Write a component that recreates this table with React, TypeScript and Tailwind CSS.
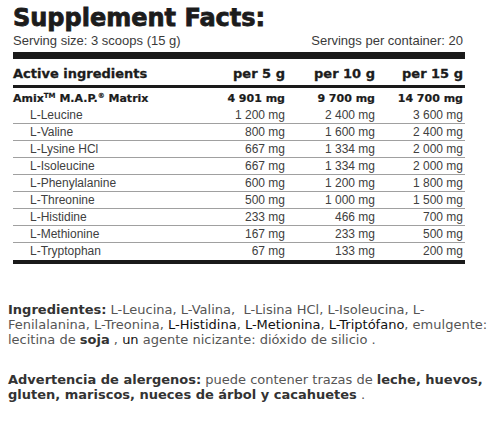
const rows = [
  ['L-Leucine', '1 200 mg', '2 400 mg', '3 600 mg'],
  ['L-Valine', '800 mg', '1 600 mg', '2 400 mg'],
  ['L-Lysine HCl', '667 mg', '1 334 mg', '2 000 mg'],
  ['L-Isoleucine', '667 mg', '1 334 mg', '2 000 mg'],
  ['L-Phenylalanine', '600 mg', '1 200 mg', '1 800 mg'],
  ['L-Threonine', '500 mg', '1 000 mg', '1 500 mg'],
  ['L-Histidine', '233 mg', '466 mg', '700 mg'],
  ['L-Methionine', '167 mg', '233 mg', '500 mg'],
  ['L-Tryptophan', '67 mg', '133 mg', '200 mg'],
]

const grid = 'grid grid-cols-[182px_90px_90px_88px] pr-[2px]'
const bold = "font-['DejaVu_Sans',sans-serif] font-bold"

export default function App() {
  return (
    <div className="w-[501px] h-[422px] bg-white overflow-hidden">
      {/* label */}
      <div className="ml-[13px] w-[452px] text-[#2e2e2e] font-['Liberation_Sans',Arial,sans-serif]">
        <div
          className={`${bold} mt-[6px] text-[24px] leading-[24px] text-[#1c1c1c] whitespace-nowrap [-webkit-text-stroke:0.8px_#1c1c1c]`}
        >
          Supplement Facts:
        </div>
        <div className="mt-[4px] flex justify-between pr-[2px] text-[13px] leading-[13px] text-[#3a3a3a]">
          <span>Serving size: 3 scoops (15 g)</span>
          <span>Servings per container: 20</span>
        </div>
        <div className="mt-[5px] h-[7px] bg-[#1a1a1a]" />
        <div
          className={`${grid} ${bold} h-[26px] items-center text-[13px] leading-[15px] text-[#1c1c1c] pt-[2px] [-webkit-text-stroke:0.3px_#1c1c1c]`}
        >
          <span>Active ingredients</span>
          <span className="text-right">per 5 g</span>
          <span className="text-right">per 10 g</span>
          <span className="text-right">per 15 g</span>
        </div>
        <div className="h-[3px] bg-[#1a1a1a]" />
        <div
          className={`${grid} ${bold} h-[19px] items-center text-[11px] leading-[13px] text-[#1c1c1c] pt-[1px] [-webkit-text-stroke:0.2px_#1c1c1c]`}
        >
          <span className="whitespace-nowrap">
            Amix<sup className="text-[7px]">TM</sup> M.A.P.<sup className="text-[7px]">®</sup> Matrix
          </span>
          <span className="text-right">4 901 mg</span>
          <span className="text-right">9 700 mg</span>
          <span className="text-right">14 700 mg</span>
        </div>
        {rows.map((r, i) => (
          <div
            key={r[0]}
            className={`${grid} h-[17px] text-[12px] leading-[16px] text-[#404040] ${
              i < rows.length - 1 ? 'border-b border-[#a0a0a0]' : ''
            }`}
          >
            <span className="pl-[17px]">{r[0]}</span>
            <span className="text-right">{r[1]}</span>
            <span className="text-right">{r[2]}</span>
            <span className="text-right">{r[3]}</span>
          </div>
        ))}
        <div className="h-[4px] bg-[#1a1a1a]" />
      </div>

      {/* ingredients */}
      <div className="ml-[8px] font-['DejaVu_Sans',Verdana,sans-serif] text-[13px] leading-[15px] text-[#555] whitespace-nowrap">
        <p className="mt-[38px]">
          <b className="text-[#333]">Ingredientes:</b> L-Leucina, L-Valina,{'\u00a0 '}L-Lisina HCl, L-Isoleucina, L-
          <br />
          Fenilalanina, L-Treonina, <span className="text-[#111]">L-Histidina</span>,{' '}
          <span className="text-[#111]">L-Metionina</span>, <span className="text-[#111]">L-Triptófano</span>, emulgente:
          <br />
          lecitina de <b className="text-[#333]">soja</b> , <span className="text-[#111]">un</span> agente nicizante: dióxido de silicio .
        </p>
        <p className="mt-[25px]">
          <b className="text-[#333]">Advertencia de alergenos:</b> puede contener trazas de{' '}
          <b className="text-[#333]">leche, huevos,</b>
          <br />
          <b className="text-[#333]">gluten, mariscos, nueces de árbol y cacahuetes</b> .
        </p>
      </div>
    </div>
  )
}
